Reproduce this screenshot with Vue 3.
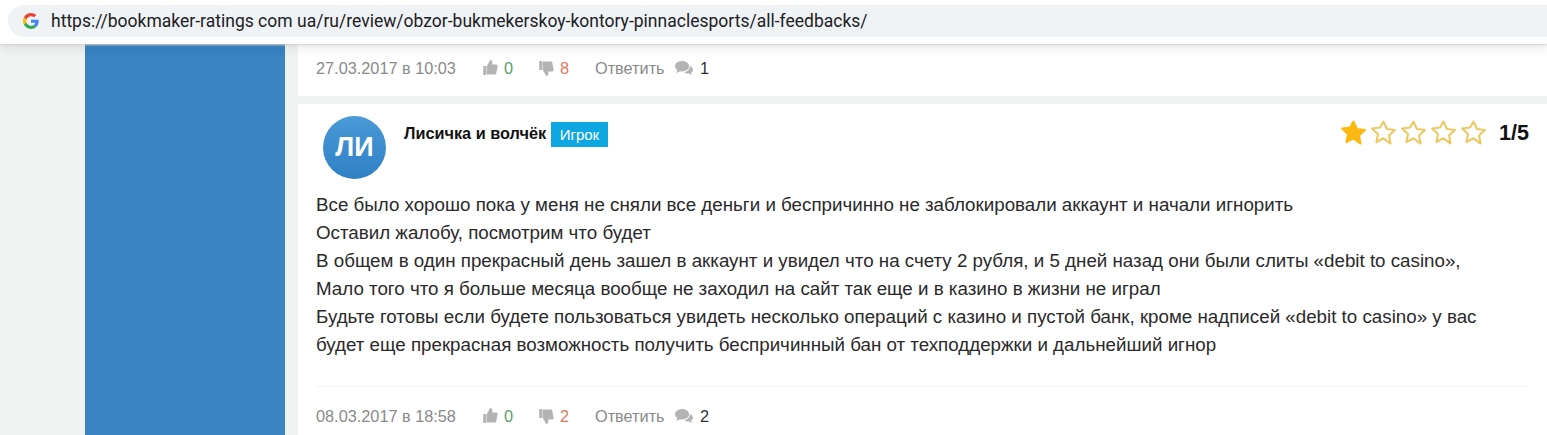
<script setup>
const reviewLines = [
  "Все было хорошо пока у меня не сняли все деньги и беспричинно не заблокировали аккаунт и начали игнорить",
  "Оставил жалобу, посмотрим что будет",
  "В общем в один прекрасный день зашел в аккаунт и увидел что на счету 2 рубля, и 5 дней назад они были слиты «debit to casino»,",
  "Мало того что я больше месяца вообще не заходил на сайт так еще и в казино в жизни не играл",
  "Будьте готовы если будете пользоваться увидеть несколько операций с казино и пустой банк, кроме надписей «debit to casino» у вас",
  "будет еще прекрасная возможность получить беспричинный бан от техподдержки и дальнейший игнор",
];
const stars = [true, false, false, false, false];
const starPath = "M9 1.6l2.3 4.9 5.3.7-3.9 3.7 1 5.3L9 12.7l-4.7 2.5 1-5.3-3.9-3.7 5.3-.7z";
const thumbPath = "M1 7h3v9H1zM4.500 7l3.500-6c1.300 0 2 .8 2 2v2.500h4c1 0 1.500.8 1.300 1.700l-1.300 7c-.2.8-.8 1.300-1.600 1.300H4.500z";
const bubblesPath = "M8 1c3.900 0 7 2.300 7 5.200s-3.100 5.200-7 5.200c-.7 0-1.300-.1-1.900-.2L2.500 13l.9-3.100C2 8.900 1 7.600 1 6.200 1 3.300 4.100 1 8 1z";
const bubbleBackPath = "M13 6h2.500c2 .6 3.500 2 3.500 3.700 0 1.200-.7 2.200-1.800 2.900l.7 2.400-2.800-1.500c-1.700.2-3.700-.2-4.800-1.300 3-.4 5.200-2.300 5.700-6.200z";
</script>

<template>
  <div class="page">
    <header class="browser-bar">
      <div class="address">
        <svg class="g-logo" viewBox="0 0 48 48" width="16" height="16">
          <path fill="#ea4335" d="M24 9.500c3.500 0 6.700 1.200 9.200 3.600l6.900-6.900C35.900 2.400 30.500 0 24 0 14.600 0 6.500 5.400 2.600 13.200l8 6.200C12.400 13.700 17.700 9.500 24 9.500z" />
          <path fill="#4285f4" d="M47 24.500c0-1.600-.1-3.100-.4-4.500H24v9h12.900c-.6 3-2.200 5.500-4.700 7.200l7.700 6C44.400 38 47 31.800 47 24.500z" />
          <path fill="#fbbc05" d="M10.600 28.600a14.500 14.500 0 0 1 0-9.200l-8-6.200a24 24 0 0 0 0 21.600z" />
          <path fill="#34a853" d="M24 48c6.500 0 11.900-2.100 15.900-5.800l-7.700-6c-2.200 1.400-4.900 2.300-8.200 2.300-6.300 0-11.600-4.200-13.400-9.900l-8 6.200C6.500 42.600 14.600 48 24 48z" />
        </svg>
        <span class="url">https://bookmaker-ratings com ua/ru/review/obzor-bukmekerskoy-kontory-pinnaclesports/all-feedbacks/</span>
      </div>
    </header>

    <div class="content">
      <aside class="sidebar"></aside>
      <main class="feed">
        <section class="card card-prev">
          <div class="meta">
            <span class="date">27.03.2017 в 10:03</span>
            <span class="vote up">
              <svg class="icon" viewBox="1 1 14.4 16" width="15" height="16"><path :d="thumbPath" /></svg>0
            </span>
            <span class="vote down">
              <svg class="icon flip" viewBox="1 1 14.4 16" width="15" height="16"><path :d="thumbPath" /></svg>8
            </span>
            <span class="reply">Ответить</span>
            <span class="replies">
              <svg class="icon" viewBox="1 1 18 15" width="18" height="15">
                <path :d="bubbleBackPath" />
                <path :d="bubblesPath" />
              </svg>1
            </span>
          </div>
        </section>

        <section class="card card-main">
          <div class="head">
            <div class="avatar">ЛИ</div>
            <div class="author">
              <span class="name">Лисичка и волчёк</span>
              <span class="badge">Игрок</span>
            </div>
            <div class="rating">
              <svg v-for="(filled, i) in stars" :key="i" class="star" :class="{ filled }" viewBox="0 0 18 17" width="27" height="26">
                <path :d="starPath" />
              </svg>
              <span class="score">1/5</span>
            </div>
          </div>
          <div class="text">
            <p v-for="line in reviewLines" :key="line">{{ line }}</p>
          </div>
          <div class="meta meta-bottom">
            <span class="date">08.03.2017 в 18:58</span>
            <span class="vote up">
              <svg class="icon" viewBox="1 1 14.4 16" width="15" height="16"><path :d="thumbPath" /></svg>0
            </span>
            <span class="vote down">
              <svg class="icon flip" viewBox="1 1 14.4 16" width="15" height="16"><path :d="thumbPath" /></svg>2
            </span>
            <span class="reply">Ответить</span>
            <span class="replies">
              <svg class="icon" viewBox="1 1 18 15" width="18" height="15">
                <path :d="bubbleBackPath" />
                <path :d="bubblesPath" />
              </svg>2
            </span>
          </div>
        </section>
      </main>
    </div>
  </div>
</template>

<style scoped>
.page {
  width: 1547px;
  height: 435px;
  overflow: hidden;
  background: #f1f3f2;
  font-family: "Liberation Sans", Arial, sans-serif;
  position: relative;
}

.browser-bar {
  height: 44px;
  padding: 5px 0 7px 8px;
  box-sizing: border-box;
  background: #fff;
  box-shadow: 0 1px 2px #d2d2d2, 0 3px 12px rgba(0, 0, 0, 0.1);
  position: relative;
  z-index: 2;
}

.address {
  height: 32px;
  display: flex;
  align-items: center;
  padding-left: 15px;
  border-radius: 16px 0 0 16px;
  background: #f0f3f5;
}

.g-logo {
  flex: none;
}

.url {
  margin-left: 12px;
  font-family: Roboto, "Liberation Sans", sans-serif;
  font-size: 17.52px;
  color: #202124;
  white-space: nowrap;
}

.content {
  display: flex;
  padding-left: 85px;
  height: 391px;
}

.sidebar {
  width: 200px;
  flex: none;
  background: #3a84c3;
}

.feed {
  flex: 1;
  margin-left: 13px;
  display: flex;
  flex-direction: column;
  gap: 8px;
}

.card {
  background: #fff;
}

.card-prev {
  height: 52px;
  padding: 14px 18px 0;
  box-sizing: border-box;
}

.card-main {
  flex: 1;
  padding: 12px 18px 0;
}

.meta {
  display: flex;
  align-items: center;
  height: 20px;
  font-size: 16.3px;
  color: #8a8a8a;
}

.meta-bottom {
  margin-top: 27px;
  padding-top: 19px;
  height: 20px;
  border-top: 1px solid #f3f3f3;
}

.date {
  width: 167px;
}

.vote {
  display: flex;
  align-items: center;
  gap: 6px;
  width: 56px;
}

.up {
  color: #5a9e6a;
}

.down {
  color: #e07a5f;
}

.reply {
  width: 80px;
}

.replies {
  display: flex;
  align-items: center;
  gap: 7px;
  color: #333;
}

.icon {
  fill: #b3b3b3;
}

.flip {
  transform: rotate(180deg) scaleX(-1);
}

.head {
  display: flex;
  height: 63px;
}

.avatar {
  width: 63px;
  height: 63px;
  margin-left: 7px;
  border-radius: 50%;
  background: linear-gradient(#4a9ad8, #2f80c4);
  color: #fff;
  font-size: 27px;
  font-weight: 700;
  line-height: 63px;
  text-align: center;
  flex: none;
}

.author {
  display: flex;
  align-items: center;
  height: 34px;
  margin-left: 18px;
}

.name {
  font-size: 16.3px;
  font-weight: 700;
  color: #111;
}

.badge {
  margin-left: 5px;
  margin-top: 2px;
  padding: 0 8.5px;
  font-size: 15px;
  line-height: 25px;
  background: #0fa7e2;
  color: #fff;
}

.rating {
  display: flex;
  align-items: center;
  height: 32px;
  margin-left: auto;
  gap: 3px;
}

.star {
  fill: #fff;
  stroke: #ecc964;
  stroke-width: 1.400;
  stroke-linejoin: round;
}

.star.filled {
  fill: #fdb913;
  stroke: #fdb913;
}

.score {
  margin-left: 9px;
  margin-top: 2px;
  font-size: 21.5px;
  font-weight: 700;
  color: #111;
}

.text {
  margin-top: 12px;
  font-size: 18.75px;
  line-height: 28px;
  color: #2a2a2a;
}

.text p {
  margin: 0;
  white-space: nowrap;
}
</style>
